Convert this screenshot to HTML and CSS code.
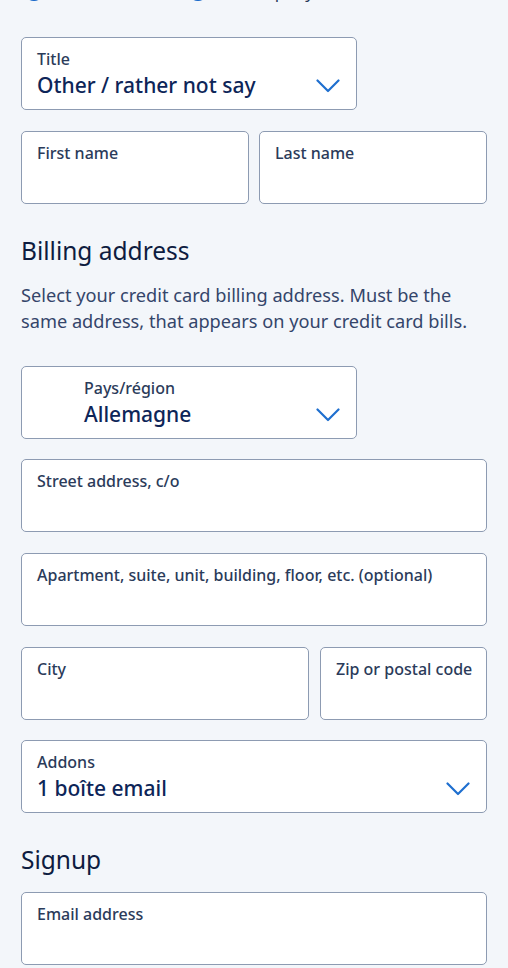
FILE: index.html
```html
<!DOCTYPE html>
<html lang="en">
<head>
<meta charset="utf-8">
<link rel="stylesheet" href="styles.css">
</head>
<body>
<div class="page">
  <div class="radios">
    <label class="radio"><span class="dot"></span><span class="rlabel">Personal</span></label>
    <label class="radio second"><span class="dot"></span><span class="rlabel">Company</span></label>
  </div>

  <div class="field select narrow">
    <div class="text">
      <div class="label">Title</div>
      <div class="value">Other / rather not say</div>
    </div>
    <svg class="chev" viewBox="0 0 24 14" width="24" height="14"><path d="M1.5 1.5 L12 12 L22.5 1.5" fill="none" stroke="#1f6fcf" stroke-width="2.2" stroke-linecap="round" stroke-linejoin="round"/></svg>
  </div>

  <div class="row two">
    <div class="field"><div class="label">First name</div></div>
    <div class="field"><div class="label">Last name</div></div>
  </div>

  <h2 class="heading">Billing address</h2>
  <p class="desc">Select your credit card billing address. Must be the same address, that appears on your credit card bills.</p>

  <div class="field select narrow country">
    <div class="text">
      <div class="label">Pays/région</div>
      <div class="value">Allemagne</div>
    </div>
    <svg class="chev" viewBox="0 0 24 14" width="24" height="14"><path d="M1.5 1.5 L12 12 L22.5 1.5" fill="none" stroke="#1f6fcf" stroke-width="2.2" stroke-linecap="round" stroke-linejoin="round"/></svg>
  </div>

  <div class="field"><div class="label">Street address, c/o</div></div>
  <div class="field"><div class="label">Apartment, suite, unit, building, floor, etc. (optional)</div></div>

  <div class="row city">
    <div class="field"><div class="label">City</div></div>
    <div class="field zip"><div class="label">Zip or postal code</div></div>
  </div>

  <div class="field select">
    <div class="text">
      <div class="label">Addons</div>
      <div class="value">1 boîte email</div>
    </div>
    <svg class="chev" viewBox="0 0 24 14" width="24" height="14"><path d="M1.5 1.5 L12 12 L22.5 1.5" fill="none" stroke="#1f6fcf" stroke-width="2.2" stroke-linecap="round" stroke-linejoin="round"/></svg>
  </div>

  <h2 class="heading signup">Signup</h2>

  <div class="field"><div class="label">Email address</div></div>
</div>
</body>
</html>
```

FILE: styles.css
```css
* { box-sizing: border-box; }
html, body {
  margin: 0;
  padding: 0;
  background: #f3f6fa;
}
body {
  font-family: "Noto Sans", "Open Sans", sans-serif;
  color: #2b3b5a;
  overflow: hidden;
}
.page {
  padding: 0 21px;
  display: flex;
  flex-direction: column;
}
.radios {
  display: flex;
  align-items: center;
  height: 24px;
  margin-top: -21px;
  margin-bottom: 34px;
  padding-left: 3px;
}
.radio {
  display: flex;
  align-items: center;
  font-size: 17px;
  color: #2b3b5a;
}
.radio.second { margin-left: 62px; }
.dot {
  width: 20px;
  height: 20px;
  border: 2.5px solid #1565c8;
  border-radius: 50%;
  background: #fff;
}
.rlabel { margin-left: 30px; }
.radios .radio:first-child .rlabel { margin-left: 12px; }
.field {
  background: #fff;
  border: 1px solid #8d9bb2;
  border-radius: 5px;
  height: 73px;
  padding: 11px 15px 0;
  margin-bottom: 20.7px;
}
.field.zip { padding-right: 8px; }
.label {
  font-size: 16px;
  line-height: 20px;
  font-weight: 500;
  color: #2b3b5a;
  white-space: nowrap;
}
.value {
  font-size: 21px;
  line-height: 28px;
  font-weight: 500;
  color: #0d2558;
  margin-top: 2px;
}
.select {
  display: flex;
  align-items: flex-start;
  justify-content: space-between;
  padding-right: 16px;
}
.chev {
  margin-top: 30px;
  flex: none;
}
.narrow { width: 336px; }
.country .text { padding-left: 47px; }
.row {
  display: grid;
  gap: 10px;
}
.row.two { grid-template-columns: 1fr 1fr; }
.row.city { grid-template-columns: 1fr 167px; gap: 11px; }
.row .field { margin-bottom: 20.7px; }
.heading {
  margin: 10.3px 0 0;
  font-size: 24.5px;
  line-height: 32px;
  font-weight: 400;
  color: #0e1c40;
}
.desc {
  margin: 15px 0 32px;
  font-size: 18.2px;
  line-height: 26px;
  color: #34456a;
}
.heading.signup {
  margin: 10px 0 16px;
}
```
